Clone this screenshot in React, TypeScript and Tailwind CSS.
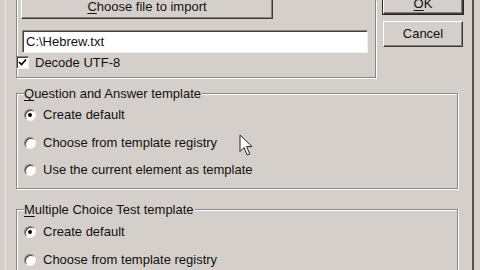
import React from 'react';

const Btn: React.FC<{ className?: string; children: React.ReactNode; def?: boolean }> = ({ className = '', children, def }) => (
  <div
    className={`flex items-center justify-center box-border border border-t-white border-l-white border-b-[#3c3a39] border-r-[#3c3a39] shadow-[inset_-1px_-1px_0_#86817e] ${
      def ? 'outline outline-1 outline-[#2a2828]' : ''
    } ${className}`}
  >
    {children}
  </div>
);

const Radio: React.FC<{ checked?: boolean }> = ({ checked }) => (
  <span className="flex items-center justify-center w-[12px] h-[12px] rounded-full bg-white box-border border border-t-[#85807d] border-l-[#85807d] border-b-[#f4f1ef] border-r-[#f4f1ef] shadow-[inset_1px_1px_0_#45423f]">
    {checked && <span className="w-[4px] h-[4px] rounded-full bg-black" />}
  </span>
);

const RadioRow: React.FC<{ label: string; checked?: boolean; className?: string }> = ({ label, checked, className = '' }) => (
  <div className={`flex items-center h-[16px] ml-[7px] gap-[7px] ${className}`}>
    <Radio checked={checked} />
    <span>{label}</span>
  </div>
);

const Legend: React.FC<{ u: string; rest: string }> = ({ u, rest }) => (
  <div className="-mt-[8px] ml-[7px] w-fit h-[15px] leading-[15px] bg-[#d5cfcb] pr-[1px]">
    <span className="underline underline-offset-2">{u}</span>
    {rest}
  </div>
);

export default function App() {
  return (
    <div
      className="flex w-[480px] h-[270px] overflow-hidden bg-[#d5cfcb] text-[13px] text-[#111]"
      style={{ fontFamily: '"Liberation Sans", Arial, sans-serif' }}
    >
      <div className="w-[6px] shrink-0 border-r border-[#ece8e5]" />
      <div className="relative w-[468px] shrink-0 pl-[10px] border-r-2 border-[#55514f]">
        {/* top row */}
        <div className="flex h-[78px]">
          <div className="w-[360px] h-[78px] box-border border-l border-r border-b border-[#8b8783] shadow-[inset_1px_0_0_#fff,1px_1px_0_#fff] flex flex-col">
            <Btn className="-mt-[5px] ml-[4px] w-[252px] h-[24px]">
              <span>
                <span className="underline underline-offset-2">C</span>hoose file to import
              </span>
            </Btn>
            <div className="mt-[11px] ml-[5px] w-[346px] h-[23px] box-border bg-white border border-t-[#85807d] border-l-[#85807d] border-b-[#f4f1ef] border-r-[#f4f1ef] shadow-[inset_1px_1px_0_#45423f] flex items-center pl-[3px]">
              C:\Hebrew.txt
            </div>
            <div className="mt-[3px] -ml-[1px] flex items-center gap-[6px] h-[13px]">
              <span className="w-[13px] h-[13px] box-border bg-white border border-t-[#85807d] border-l-[#85807d] border-b-[#f4f1ef] border-r-[#f4f1ef] shadow-[inset_1px_1px_0_#45423f] flex items-center justify-center">
                <svg width="9" height="9" viewBox="0 0 9 9">
                  <path d="M1 4 L3.5 6.5 L8 1.5" fill="none" stroke="#000" strokeWidth="1.7" />
                </svg>
              </span>
              <span>Decode UTF-8</span>
            </div>
          </div>
          <div className="ml-[7px] w-[80px] flex flex-col">
            <Btn def className="-mt-[6px] h-[20px]">
              <span>
                <span className="underline underline-offset-2">O</span>K
              </span>
            </Btn>
            <Btn className="mt-[7px] h-[26px]">Cancel</Btn>
          </div>
        </div>

        {/* Question and Answer template */}
        <div className="mt-[15px] w-[442px] h-[96px] box-border border border-[#8b8783] shadow-[inset_1px_1px_0_#fff,1px_1px_0_#fff] flex flex-col">
          <Legend u="Q" rest="uestion and Answer template" />
          <RadioRow className="mt-[6px]" checked label="Create default" />
          <RadioRow className="mt-[12px]" label="Choose from template registry" />
          <RadioRow className="mt-[11px]" label="Use the current element as template" />
        </div>

        {/* Multiple Choice Test template */}
        <div className="mt-[20px] w-[442px] h-[120px] box-border border border-[#8b8783] shadow-[inset_1px_1px_0_#fff,1px_1px_0_#fff] flex flex-col">
          <Legend u="M" rest="ultiple Choice Test template" />
          <RadioRow className="mt-[7px]" checked label="Create default" />
          <RadioRow className="mt-[12px]" label="Choose from template registry" />
        </div>

        {/* mouse pointer */}
        <svg className="absolute left-[233px] top-[134px]" width="15" height="23" viewBox="0 0 15 23">
          <path d="M1 1 L1 17.5 L5 13.5 L8.2 21 L10.8 20 L7.6 12.6 L13 12.6 Z" fill="#fff" stroke="#222" strokeWidth="1" strokeLinejoin="miter" />
        </svg>
      </div>
    </div>
  );
}
